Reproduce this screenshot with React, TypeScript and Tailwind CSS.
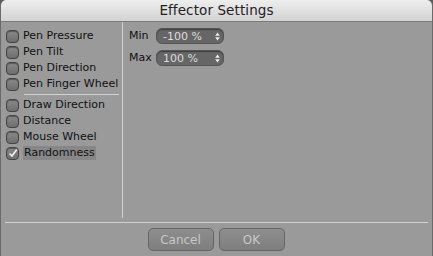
import React from "react";

const leftTop = ["Pen Pressure", "Pen Tilt", "Pen Direction", "Pen Finger Wheel"];
const leftBottom = ["Draw Direction", "Distance", "Mouse Wheel", "Randomness"];

const Check: React.FC<{ on?: boolean }> = ({ on }) => (
  <div className="w-[13px] h-[13px] rounded-[4px] border border-[#444] bg-gradient-to-b from-[#8a8a8a] to-[#6e6e6e] flex items-center justify-center shadow-[inset_0_1px_1px_rgba(0,0,0,0.35)]">
    {on && (
      <svg width="10" height="10" viewBox="0 0 10 10">
        <path d="M1.5 5.5 L4 8 L8.8 1.5" stroke="#f2f2f2" strokeWidth="1.6" fill="none" />
      </svg>
    )}
  </div>
);

const Row: React.FC<{ label: string; on?: boolean }> = ({ label, on }) => (
  <div className="flex items-center h-[16px] gap-[4px]">
    <Check on={on} />
    <span className={on ? "bg-[#878787] px-[1px] leading-[14px]" : "leading-[14px]"}>{label}</span>
  </div>
);

const Field: React.FC<{ label: string; value: string }> = ({ label, value }) => (
  <div className="flex items-center h-[22px]">
    <span className="w-[27px]">{label}</span>
    <div className="w-[68px] h-[16px] rounded-[6px] bg-[#666] border border-[#555] flex items-center justify-between pl-[6px] pr-[3px] text-[#ddd] shadow-[inset_0_1px_1px_rgba(0,0,0,0.4)]">
      <span className="leading-none">{value}</span>
      <svg width="5" height="9" viewBox="0 0 5 9">
        <path d="M2.5 0.5 L4.8 3.8 L0.2 3.8 Z M2.5 8.5 L4.8 5.2 L0.2 5.2 Z" fill="#eee" />
      </svg>
    </div>
  </div>
);

const App: React.FC = () => {
  return (
    <div className="w-[433px] h-[256px] bg-[#5c5c5c] font-['Lucida_Grande','DejaVu_Sans',sans-serif]">
      <div className="w-full h-full flex flex-col rounded-t-[6px] overflow-hidden bg-[#9a9a9a] border-x border-[#6a6a6a]">
        <div className="h-[22px] shrink-0 bg-gradient-to-b from-[#eeeeee] to-[#d3d3d3] border-b border-[#7a7a7a] flex items-center justify-center text-[13.5px] text-[#222] tracking-[0.1px]">
          Effector Settings
        </div>
        <div className="flex flex-1 text-[11px] text-[#111] pb-[4px]">
          <div className="w-[122px] pl-[5px] pt-[6px] border-r border-[#d0d0d0]">
            {leftTop.map((l) => (
              <Row key={l} label={l} />
            ))}
            <div className="ml-[18px] mr-[3px] my-[2px] h-px bg-[#d2d2d2]" />
            {leftBottom.map((l) => (
              <Row key={l} label={l} on={l === "Randomness"} />
            ))}
          </div>
          <div className="pl-[6px] pt-[3px]">
            <Field label="Min" value="-100 %" />
            <Field label="Max" value="100 %" />
          </div>
        </div>
        <div className="mx-[4px] h-px bg-[#d0d0d0] shrink-0" />
        <div className="h-[33px] shrink-0 flex items-center justify-center gap-[5px] pr-[1px]">
          <button className="w-[66px] h-[23px] rounded-[5px] border border-[#666] bg-gradient-to-b from-[#8e8e8e] to-[#7e7e7e] text-[12px] text-[#c8c8c8]">
            Cancel
          </button>
          <button className="w-[66px] h-[23px] rounded-[5px] border border-[#666] bg-gradient-to-b from-[#8e8e8e] to-[#7e7e7e] text-[12px] text-[#c8c8c8]">
            OK
          </button>
        </div>
      </div>
    </div>
  );
};

export default App;
